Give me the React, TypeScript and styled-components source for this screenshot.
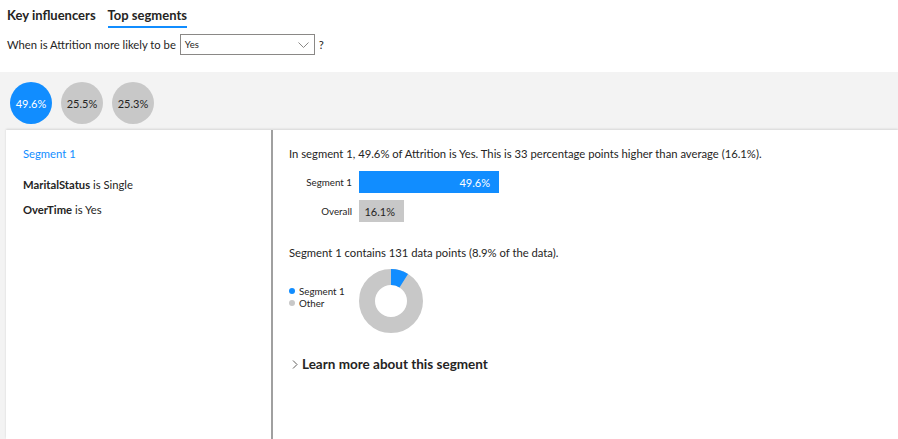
import React from "react";
import styled, { createGlobalStyle } from "styled-components";

const GlobalStyle = createGlobalStyle`
  html, body { margin: 0; padding: 0; background: #ffffff; }
  body {
    font-family: Lato, "Noto Sans", sans-serif;
    color: #252423;
    width: 898px;
    height: 439px;
    overflow: hidden;
  }
`;

const Page = styled.div`
  display: flex;
  flex-direction: column;
  width: 898px;
  height: 439px;
`;

const Header = styled.div`
  padding: 6px 7px 0 7px;
  display: flex;
  flex-direction: column;
`;

const Tabs = styled.div`
  display: flex;
  gap: 12px;
`;

const Tab = styled.div<{ $active?: boolean }>`
  font-size: 13px;
  font-weight: 700;
  line-height: 19px;
  padding-bottom: 1px;
  color: #252423;
  border-bottom: 2px solid ${(p) => (p.$active ? "#118dff" : "transparent")};
`;

const Question = styled.div`
  display: flex;
  align-items: center;
  gap: 4px;
  margin-top: 6px;
  font-size: 11.25px;
  color: #252423;
`;

const Select = styled.div`
  width: 124px;
  height: 19px;
  border: 1px solid #8a8886;
  display: flex;
  align-items: center;
  justify-content: space-between;
  padding: 0 5px 0 4px;
  box-sizing: content-box;
  font-size: 9.5px;
  color: #252423;
`;

const Band = styled.div`
  margin-top: 17px;
  flex: 1;
  background: #f3f3f3;
  display: flex;
  flex-direction: column;
  padding-left: 6px;
  min-height: 0;
`;

const Bubbles = styled.div`
  display: flex;
  gap: 9px;
  padding: 10px 0 6px 4px;
`;

const Bubble = styled.div<{ $active?: boolean }>`
  width: 42px;
  height: 42px;
  border-radius: 50%;
  background: ${(p) => (p.$active ? "#118dff" : "#c8c8c8")};
  color: ${(p) => (p.$active ? "#ffffff" : "#252423")};
  font-size: 11px;
  display: flex;
  align-items: center;
  justify-content: center;
`;

const Card = styled.div`
  flex: 1;
  background: #ffffff;
  display: flex;
  box-shadow: 0 -1px 2px rgba(0, 0, 0, 0.12);
  min-height: 0;
`;

const LeftCol = styled.div`
  width: 248px;
  border-right: 2px solid #a0a0a0;
  padding: 16px 0 0 17px;
  display: flex;
  flex-direction: column;
`;

const SegTitle = styled.div`
  color: #118dff;
  font-size: 11.25px;
  line-height: 16px;
  margin-bottom: 15px;
`;

const Condition = styled.div`
  font-size: 11.25px;
  line-height: 16px;
  margin-bottom: 9px;
  color: #252423;
  b { font-weight: 700; }
`;

const RightCol = styled.div`
  flex: 1;
  padding: 16px 0 0 16px;
  display: flex;
  flex-direction: column;
`;

const Sentence = styled.div`
  font-size: 11.25px;
  line-height: 16px;
  color: #252423;
  white-space: nowrap;
`;

const Bars = styled.div`
  display: grid;
  grid-template-columns: 63px auto;
  column-gap: 7px;
  row-gap: 7px;
  margin-top: 9px;
  align-items: center;
  justify-items: start;
`;

const BarLabel = styled.div`
  font-size: 9.75px;
  justify-self: end;
  color: #252423;
`;

const Bar = styled.div<{ $active?: boolean }>`
  height: 22px;
  background: ${(p) => (p.$active ? "#118dff" : "#c8c8c8")};
  color: ${(p) => (p.$active ? "#ffffff" : "#252423")};
  font-size: 11px;
  display: flex;
  align-items: center;
  justify-content: flex-end;
  padding-right: 9px;
  box-sizing: border-box;
`;

const DataLine = styled(Sentence)`
  margin-top: 23px;
`;

const DonutRow = styled.div`
  display: flex;
  align-items: center;
  margin-top: 7px;
`;

const Legend = styled.div`
  display: flex;
  flex-direction: column;
  width: 69px;
  margin-top: -8px;
`;

const LegendItem = styled.div<{ $color: string }>`
  font-size: 9.75px;
  line-height: 12px;
  display: flex;
  align-items: center;
  gap: 4px;
  color: #252423;
  &::before {
    content: "";
    width: 6px;
    height: 6px;
    border-radius: 50%;
    background: ${(p) => p.$color};
  }
`;

const LearnMore = styled.div`
  display: flex;
  align-items: center;
  gap: 4px;
  margin-top: 22px;
  font-size: 13.5px;
  font-weight: 700;
  color: #252423;
  padding-left: 3px;
`;

const Donut = () => {
  const r = 24;
  const c = 2 * Math.PI * r;
  const frac = 0.089;
  return (
    <svg width="66" height="66" viewBox="0 0 66 66">
      <circle cx="33" cy="33" r={r} fill="none" stroke="#c8c8c8" strokeWidth="16" />
      <circle
        cx="33"
        cy="33"
        r={r}
        fill="none"
        stroke="#118dff"
        strokeWidth="16"
        strokeDasharray={`${c * frac} ${c}`}
        transform="rotate(-90 33 33)"
      />
    </svg>
  );
};

export default function App() {
  return (
    <>
      <GlobalStyle />
      <Page>
        <Header>
          <Tabs>
            <Tab>Key influencers</Tab>
            <Tab $active>Top segments</Tab>
          </Tabs>
          <Question>
            <span>When is Attrition more likely to be</span>
            <Select>
              <span>Yes</span>
              <svg width="11" height="6" viewBox="0 0 11 6">
                <path d="M0.5 0.5 L5.5 5.5 L10.5 0.5" fill="none" stroke="#8a8886" strokeWidth="1" />
              </svg>
            </Select>
            <span>?</span>
          </Question>
        </Header>
        <Band>
          <Bubbles>
            <Bubble $active>49.6%</Bubble>
            <Bubble>25.5%</Bubble>
            <Bubble>25.3%</Bubble>
          </Bubbles>
          <Card>
            <LeftCol>
              <SegTitle>Segment 1</SegTitle>
              <Condition>
                <b>MaritalStatus</b> is Single
              </Condition>
              <Condition>
                <b>OverTime</b> is Yes
              </Condition>
            </LeftCol>
            <RightCol>
              <Sentence>
                In segment 1, 49.6% of Attrition is Yes. This is 33 percentage points higher than average (16.1%).
              </Sentence>
              <Bars>
                <BarLabel>Segment 1</BarLabel>
                <Bar $active style={{ width: 140 }}>49.6%</Bar>
                <BarLabel>Overall</BarLabel>
                <Bar style={{ width: 45 }}>16.1%</Bar>
              </Bars>
              <DataLine>Segment 1 contains 131 data points (8.9% of the data).</DataLine>
              <DonutRow>
                <Legend>
                  <LegendItem $color="#118dff">Segment 1</LegendItem>
                  <LegendItem $color="#c8c8c8">Other</LegendItem>
                </Legend>
                <Donut />
              </DonutRow>
              <LearnMore>
                <svg width="6" height="9" viewBox="0 0 6 9">
                  <path d="M1 0.5 L5 4.5 L1 8.5" fill="none" stroke="#605e5c" strokeWidth="1" />
                </svg>
                <span>Learn more about this segment</span>
              </LearnMore>
            </RightCol>
          </Card>
        </Band>
      </Page>
    </>
  );
}
